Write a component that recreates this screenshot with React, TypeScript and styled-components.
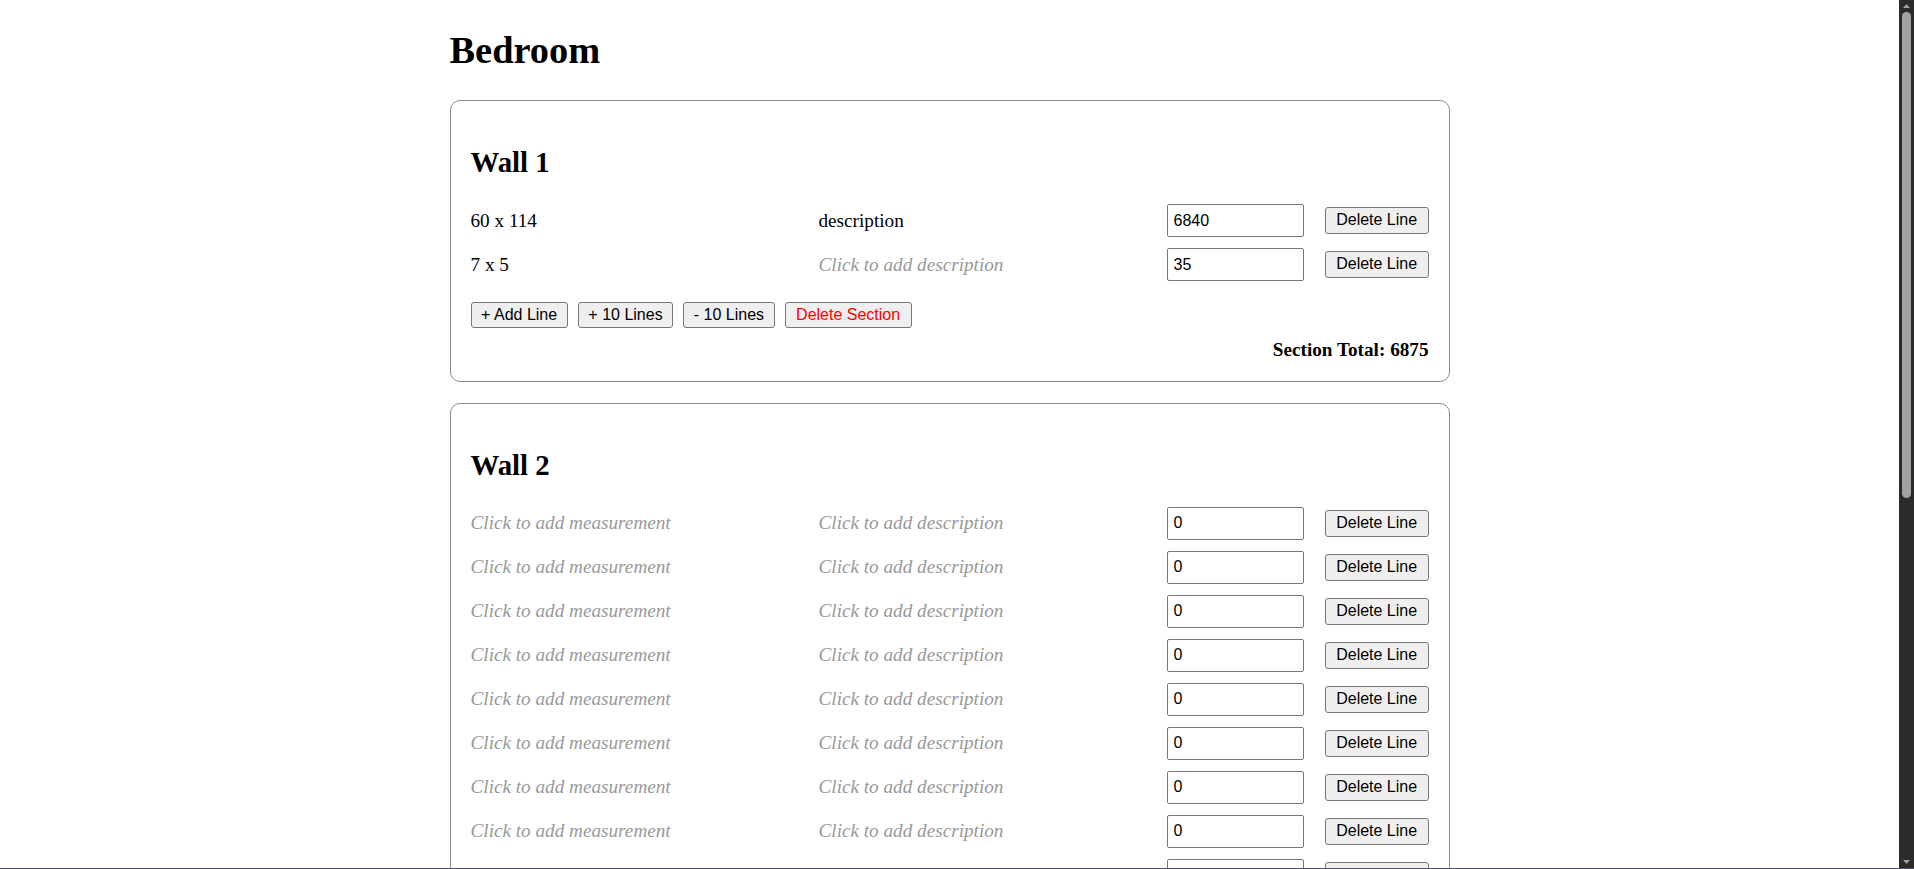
import React, { useState } from "react";
import styled, { createGlobalStyle } from "styled-components";

const GlobalStyle = createGlobalStyle`
  html, body {
    margin: 0;
    padding: 0;
    height: 100%;
    overflow: hidden;
    background: #ffffff;
  }
  body {
    font-family: "Liberation Serif", "Times New Roman", serif;
    font-size: 19.2px;
    color: #000000;
  }
  #root {
    height: 100%;
  }
`;

const Frame = styled.div`
  display: flex;
  height: 100vh;
  box-sizing: border-box;
  border-bottom: 1px solid #4a5464;
`;

const Viewport = styled.main`
  flex: 1;
  min-width: 0;
  overflow: hidden;
`;

const Page = styled.div`
  max-width: 1000px;
  margin: 0 auto;
  padding-top: 28px;
`;

const Title = styled.h1`
  margin: 0 0 28px;
  font-size: 38.4px;
  line-height: 44px;
  font-weight: bold;
`;

const Card = styled.section`
  box-sizing: border-box;
  border: 1px solid #8c8c8c;
  border-radius: 10px;
  padding: 20px;
  margin-bottom: 20.5px;
`;

const SectionTitle = styled.h2`
  margin: 25px 0;
  font-size: 28.8px;
  line-height: 33px;
  font-weight: bold;
`;

const Lines = styled.div`
  display: flex;
  flex-direction: column;
  gap: 11px;
`;

const Row = styled.div`
  display: flex;
  align-items: center;
  min-height: 33px;
`;

const Cell = styled.div<{ $empty: boolean }>`
  flex: 1 1 0;
  min-width: 0;
  line-height: 22px;
  cursor: text;
  font-style: ${(p) => (p.$empty ? "italic" : "normal")};
  color: ${(p) => (p.$empty ? "#999999" : "#000000")};
`;

const Amount = styled.input`
  box-sizing: border-box;
  flex: none;
  width: 137.6px;
  height: 33px;
  margin: 0 20.7px 0 0;
  padding: 0 6px;
  border: 1px solid #767676;
  border-radius: 2px;
  font: 16px "Liberation Sans", Arial, sans-serif;
  color: #000000;
  background: #ffffff;
  outline: none;
`;

const Button = styled.button<{ $danger?: boolean; $wide?: boolean }>`
  box-sizing: border-box;
  flex: none;
  height: 26.4px;
  padding: 0 ${(p) => (p.$wide ? "10.4px" : "9.6px")};
  border: 1px solid #767676;
  border-radius: 3px;
  background: #efefef;
  font: 16px "Liberation Sans", Arial, sans-serif;
  line-height: 18px;
  color: ${(p) => (p.$danger ? "#ff0000" : "#000000")};
  cursor: pointer;
  white-space: nowrap;
`;

const Actions = styled.div`
  display: flex;
  gap: 10px;
  margin-top: 21px;
`;

const Total = styled.div`
  margin-top: 11px;
  text-align: right;
  font-weight: bold;
  line-height: 22px;
`;

const ScrollTrack = styled.div`
  flex: none;
  width: 15px;
  background: #2b2b2b;
  display: flex;
  flex-direction: column;
  align-items: center;
`;

const ScrollArrow = styled.div`
  width: 100%;
  height: 12px;
  display: flex;
  align-items: center;
  justify-content: center;
`;

const Thumb = styled.div`
  width: 9px;
  height: 486px;
  border-radius: 5px;
  background: #a1a1a1;
`;

const Spacer = styled.div`
  flex: 1;
`;

type Line = { measurement: string; description: string; amount: string };
type Section = { name: string; lines: Line[] };

const emptyLines = (n: number): Line[] =>
  Array.from({ length: n }, () => ({ measurement: "", description: "", amount: "0" }));

const initial: Section[] = [
  {
    name: "Wall 1",
    lines: [
      { measurement: "60 x 114", description: "description", amount: "6840" },
      { measurement: "7 x 5", description: "", amount: "35" },
    ],
  },
  { name: "Wall 2", lines: emptyLines(10) },
];

const Arrow = ({ down }: { down?: boolean }) => (
  <svg width="7" height="4" viewBox="0 0 7 4">
    <path d={down ? "M0 0 L7 0 L3.5 4 Z" : "M0 4 L7 4 L3.5 0 Z"} fill="#a1a1a1" />
  </svg>
);

export default function App() {
  const [sections, setSections] = useState<Section[]>(initial);

  const setAmount = (si: number, li: number, value: string) => {
    setSections((prev) =>
      prev.map((s, i) =>
        i !== si
          ? s
          : { ...s, lines: s.lines.map((l, j) => (j === li ? { ...l, amount: value } : l)) }
      )
    );
  };

  const deleteLine = (si: number, li: number) => {
    setSections((prev) =>
      prev.map((s, i) => (i !== si ? s : { ...s, lines: s.lines.filter((_, j) => j !== li) }))
    );
  };

  const addLines = (si: number, n: number) => {
    setSections((prev) =>
      prev.map((s, i) => (i !== si ? s : { ...s, lines: [...s.lines, ...emptyLines(n)] }))
    );
  };

  const removeLines = (si: number, n: number) => {
    setSections((prev) =>
      prev.map((s, i) =>
        i !== si ? s : { ...s, lines: s.lines.slice(0, Math.max(0, s.lines.length - n)) }
      )
    );
  };

  const deleteSection = (si: number) => {
    setSections((prev) => prev.filter((_, i) => i !== si));
  };

  return (
    <>
      <GlobalStyle />
      <Frame>
        <Viewport>
          <Page>
            <Title>Bedroom</Title>
            {sections.map((section, si) => {
              const total = section.lines.reduce((sum, l) => sum + (parseFloat(l.amount) || 0), 0);
              return (
                <Card key={si}>
                  <SectionTitle>{section.name}</SectionTitle>
                  <Lines>
                    {section.lines.map((line, li) => (
                      <Row key={li}>
                        <Cell $empty={!line.measurement}>
                          {line.measurement || "Click to add measurement"}
                        </Cell>
                        <Cell $empty={!line.description}>
                          {line.description || "Click to add description"}
                        </Cell>
                        <Amount
                          type="text"
                          value={line.amount}
                          onChange={(e) => setAmount(si, li, e.target.value)}
                        />
                        <Button $wide onClick={() => deleteLine(si, li)}>
                          Delete Line
                        </Button>
                      </Row>
                    ))}
                  </Lines>
                  <Actions>
                    <Button onClick={() => addLines(si, 1)}>+ Add Line</Button>
                    <Button onClick={() => addLines(si, 10)}>+ 10 Lines</Button>
                    <Button onClick={() => removeLines(si, 10)}>- 10 Lines</Button>
                    <Button $danger $wide onClick={() => deleteSection(si)}>
                      Delete Section
                    </Button>
                  </Actions>
                  <Total>Section Total: {total}</Total>
                </Card>
              );
            })}
          </Page>
        </Viewport>
        <ScrollTrack>
          <ScrollArrow>
            <Arrow />
          </ScrollArrow>
          <Thumb />
          <Spacer />
          <ScrollArrow>
            <Arrow down />
          </ScrollArrow>
        </ScrollTrack>
      </Frame>
    </>
  );
}
